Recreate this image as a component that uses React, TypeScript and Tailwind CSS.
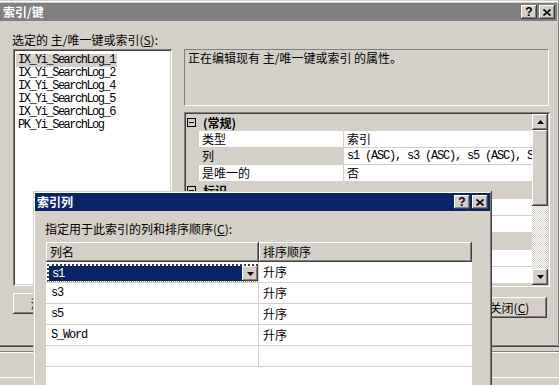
import React from "react";

const raised =
  "shadow-[inset_-1px_-1px_#404040,inset_1px_1px_#ffffff,inset_-2px_-2px_#808080,inset_2px_2px_#d4d0c8]";
const sunken =
  "shadow-[inset_1px_1px_#808080,inset_-1px_-1px_#ffffff,inset_2px_2px_#404040,inset_-2px_-2px_#d4d0c8]";
const frame =
  "shadow-[inset_-1px_-1px_#404040,inset_1px_1px_#d4d0c8,inset_-2px_-2px_#808080,inset_2px_2px_#ffffff]";
const mono = "font-['Liberation_Mono',monospace] tracking-[-1.2px]";

function UpArrow() {
  return (
    <svg width="7" height="4" viewBox="0 0 7 4">
      <path d="M3.5 0 L7 4 L0 4 Z" fill="black" />
    </svg>
  );
}

function DownArrow() {
  return (
    <svg width="7" height="4" viewBox="0 0 7 4">
      <path d="M0 0 L7 0 L3.5 4 Z" fill="black" />
    </svg>
  );
}

function CaptionButtons() {
  return (
    <div className="flex gap-[2px]">
      <div className={`w-[16px] h-[14px] bg-[#d4d0c8] ${raised} flex items-center justify-center`}>
        <span className="font-['Liberation_Sans',sans-serif] font-bold text-[12px] leading-none text-black">?</span>
      </div>
      <div className={`w-[16px] h-[14px] bg-[#d4d0c8] ${raised} flex items-center justify-center`}>
        <svg width="8" height="7" viewBox="0 0 8 7">
          <path d="M0.5 0.5L7.5 6.5M7.5 0.5L0.5 6.5" stroke="black" strokeWidth="1.6" />
        </svg>
      </div>
    </div>
  );
}

type PropRow =
  | { cat: true; label: string }
  | { cat?: false; label: string; value: string; mono?: boolean; selected?: boolean };

const propRows: PropRow[] = [
  { cat: true, label: "(常规)" },
  { label: "类型", value: "索引" },
  { label: "列", value: "s1 (ASC), s3 (ASC), s5 (ASC), S_Word (ASC)", mono: true, selected: true },
  { label: "是唯一的", value: "否" },
  { cat: true, label: "标识" },
  { label: "", value: "" },
  { label: "", value: "" },
  { cat: true, label: "" },
  { label: "", value: "" },
  { label: "", value: "" },
];

const listItems = [
  "IX_Yi_SearchLog_1",
  "IX_Yi_SearchLog_2",
  "IX_Yi_SearchLog_4",
  "IX_Yi_SearchLog_5",
  "IX_Yi_SearchLog_6",
  "PK_Yi_SearchLog",
];

const colRows = ["s3", "s5", "S_Word", ""];

export default function App() {
  return (
    <div className="relative w-[559px] h-[385px] overflow-hidden bg-[#d4d0c8] font-['Noto_Sans_CJK_SC',sans-serif] text-[12px] leading-[14px] text-black">
      <div className="flex flex-col">
        {/* outer window */}
        <div className={`-ml-[3px] w-[563px] h-[347px] p-[3px] bg-[#d4d0c8] ${frame} flex flex-col`}>
          <div className="h-[18px] shrink-0 bg-[#808080] flex items-center justify-between pl-[3px] pr-[2px]">
            <span className="text-white font-bold">索引/键</span>
            <CaptionButtons />
          </div>
          <div className="pl-[12px] mt-[12px] whitespace-nowrap">
            选定的 主/唯一键或索引(<span className="underline">S</span>):
          </div>
          <div className="flex mt-[2px] h-[238px] items-start">
            <div className={`ml-[13px] w-[159px] h-[237px] bg-white ${sunken} pt-[2px] flex flex-col overflow-hidden`}>
              {listItems.map((it, i) => (
                <div key={it} className="h-[13px] leading-[13px] pl-[3px]">
                  <span
                    className={`inline-block px-[2px] font-['Liberation_Mono',monospace] tracking-[-1.5px] ${
                      i === 0 ? "bg-[#d4d0c8]" : ""
                    }`}
                  >
                    {it}
                  </span>
                </div>
              ))}
            </div>
            <div className="ml-[12px] w-[366px] flex flex-col">
              <div className="h-[57px] w-[365px] border border-t-[#808080] border-l-[#808080] border-b-white border-r-white pl-[3px] pt-[1px] whitespace-nowrap">
                正在编辑现有 主/唯一键或索引 的属性。
              </div>
              <div className={`mt-[6px] h-[175px] p-[2px] flex bg-[#d4d0c8] ${sunken}`}>
                <div className="flex-1 flex flex-col overflow-hidden">
                  {propRows.map((r, i) =>
                    r.cat ? (
                      <div key={i} className="h-[17px] shrink-0 flex items-center bg-[#d4d0c8]">
                        <div className="ml-[1px] w-[9px] h-[9px] border border-black flex items-center justify-center">
                          <div className="w-[5px] h-px bg-black" />
                        </div>
                        <span className="ml-[7px] font-bold">{r.label}</span>
                      </div>
                    ) : (
                      <div key={i} className="h-[17px] shrink-0 flex">
                        <div className="w-[13px] bg-[#d4d0c8]" />
                        <div
                          className={`w-[145px] border-b border-r border-[#d4d0c8] pl-[3px] flex items-center whitespace-nowrap ${
                            r.selected ? "bg-[#d4d0c8]" : "bg-white"
                          }`}
                        >
                          {r.label}
                        </div>
                        <div
                          className={`flex-1 min-w-0 bg-white border-b border-[#d4d0c8] pl-[3px] flex items-center whitespace-nowrap overflow-hidden ${
                            r.mono ? mono : ""
                          }`}
                        >
                          {r.value}
                        </div>
                      </div>
                    )
                  )}
                </div>
                <div className="w-[16px] flex flex-col">
                  <div className={`h-[16px] bg-[#d4d0c8] ${raised} flex items-center justify-center`}>
                    <UpArrow />
                  </div>
                  <div className={`h-[76px] bg-[#d4d0c8] ${raised}`} />
                  <div className="flex-1 bg-[repeating-conic-gradient(#ffffff_0%_25%,#d4d0c8_0%_50%)] bg-[length:2px_2px]" />
                  <div className={`h-[16px] bg-[#d4d0c8] ${raised} flex items-center justify-center`}>
                    <DownArrow />
                  </div>
                </div>
              </div>
            </div>
          </div>
          <div className="flex justify-between items-start mt-[6px] pl-[13px] pr-[10px]">
            <div className={`w-[75px] h-[21px] bg-[#d4d0c8] ${raised} flex items-center justify-center`}>
              添加(<span className="underline">A</span>)
            </div>
            <div className={`mt-[4px] w-[75px] h-[21px] bg-[#d4d0c8] ${raised} flex items-center justify-center`}>
              关闭(<span className="underline">C</span>)
            </div>
          </div>
        </div>
        {/* parent window strip below */}
        <div className="h-[38px] flex flex-col">
          <div className="mt-[4px] h-px bg-[#808080]" />
          <div className="h-px bg-white" />
          <div className="mt-[24px] h-px bg-white" />
        </div>
      </div>

      {/* inner dialog */}
      <div className={`absolute left-[33px] top-[191px] w-[459px] h-[200px] p-[2px] bg-[#d4d0c8] ${frame} flex flex-col`}>
        <div className="h-[18px] shrink-0 bg-[#0a246a] flex items-center justify-between pl-[2px] pr-[2px]">
          <span className="text-white font-bold">索引列</span>
          <CaptionButtons />
        </div>
        <div className="ml-[10px] mt-[11px] whitespace-nowrap">
          指定用于此索引的列和排序顺序(<span className="underline">C</span>):
        </div>
        <div className="ml-[11px] mt-[6px] w-[426px] flex-1 bg-white flex flex-col">
          <div className="h-[20px] flex shrink-0">
            <div className={`w-[213px] bg-[#d4d0c8] ${raised} pl-[4px] flex items-center`}>列名</div>
            <div className={`w-[213px] bg-[#d4d0c8] ${raised} pl-[4px] flex items-center`}>排序顺序</div>
          </div>
          <div className="h-[21px] shrink-0 flex border-b border-[#d4d0c8]">
            <div className="w-[213px] border-r border-[#d4d0c8] pt-[2px] pl-[1px] flex">
              <div className="flex-1 flex border-t-2 border-l-2 border-t-[#404040] border-l-[#404040] border-b border-dotted border-b-[#a08840]">
                <div className={`flex-1 bg-[#0a246a] text-white pl-[3px] flex items-center ${mono}`}>s1</div>
                <div className={`w-[16px] bg-[#d4d0c8] ${raised} flex items-center justify-center`}>
                  <DownArrow />
                </div>
              </div>
            </div>
            <div className="flex-1 pl-[4px] flex items-center">升序</div>
          </div>
          {colRows.map((c, i) => (
            <div key={i} className="h-[21px] shrink-0 flex border-b border-[#d4d0c8]">
              <div className={`w-[213px] border-r border-[#d4d0c8] pl-[5px] flex items-center ${mono}`}>{c}</div>
              <div className="flex-1 pl-[4px] flex items-center">{c ? "升序" : ""}</div>
            </div>
          ))}
        </div>
      </div>
    </div>
  );
}
